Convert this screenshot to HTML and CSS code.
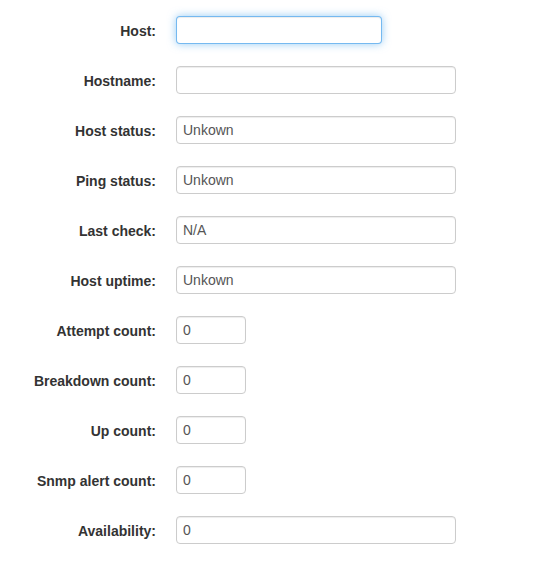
FILE: index.html
```html
<!DOCTYPE html>
<html>
<head>
<meta charset="utf-8">
<link rel="stylesheet" href="styles.css">
</head>
<body>
<form class="form">
  <div class="row"><label class="lbl">Host:</label><input class="inp mid focus" type="text" value=""></div>
  <div class="row"><label class="lbl">Hostname:</label><input class="inp wide" type="text" value=""></div>
  <div class="row"><label class="lbl">Host status:</label><input class="inp wide" type="text" value="Unkown"></div>
  <div class="row"><label class="lbl">Ping status:</label><input class="inp wide" type="text" value="Unkown"></div>
  <div class="row"><label class="lbl">Last check:</label><input class="inp wide" type="text" value="N/A"></div>
  <div class="row"><label class="lbl">Host uptime:</label><input class="inp wide" type="text" value="Unkown"></div>
  <div class="row"><label class="lbl">Attempt count:</label><input class="inp small" type="text" value="0"></div>
  <div class="row"><label class="lbl">Breakdown count:</label><input class="inp small" type="text" value="0"></div>
  <div class="row"><label class="lbl">Up count:</label><input class="inp small" type="text" value="0"></div>
  <div class="row"><label class="lbl">Snmp alert count:</label><input class="inp small" type="text" value="0"></div>
  <div class="row"><label class="lbl">Availability:</label><input class="inp wide" type="text" value="0"></div>
</form>
</body>
</html>
```
FILE: styles.css
```css
html, body {
  margin: 0;
  padding: 0;
  background: #fff;
}
.form {
  display: flex;
  flex-direction: column;
  gap: 22px;
  padding-top: 16px;
  font-family: "Liberation Sans", Arial, sans-serif;
}
.row {
  display: flex;
  align-items: center;
  gap: 20px;
  height: 28px;
}
.lbl {
  width: 156px;
  padding-top: 2px;
  text-align: right;
  font-size: 14px;
  font-weight: bold;
  color: #333;
}
.inp {
  box-sizing: border-box;
  height: 28px;
  margin: 0;
  padding: 0 6px;
  border: 1px solid #ccc;
  border-radius: 4px;
  font-family: "Liberation Sans", Arial, sans-serif;
  font-size: 14px;
  color: #555;
  background: #fff;
  box-shadow: inset 0 1px 1px rgba(0,0,0,0.075);
  outline: none;
}
.wide { width: 280px; }
.mid { width: 206px; }
.small { width: 70px; }
.focus {
  border-color: rgba(82,168,236,0.8);
  box-shadow: inset 0 1px 1px rgba(0,0,0,0.075), 0 0 8px rgba(82,168,236,0.6);
}
```
